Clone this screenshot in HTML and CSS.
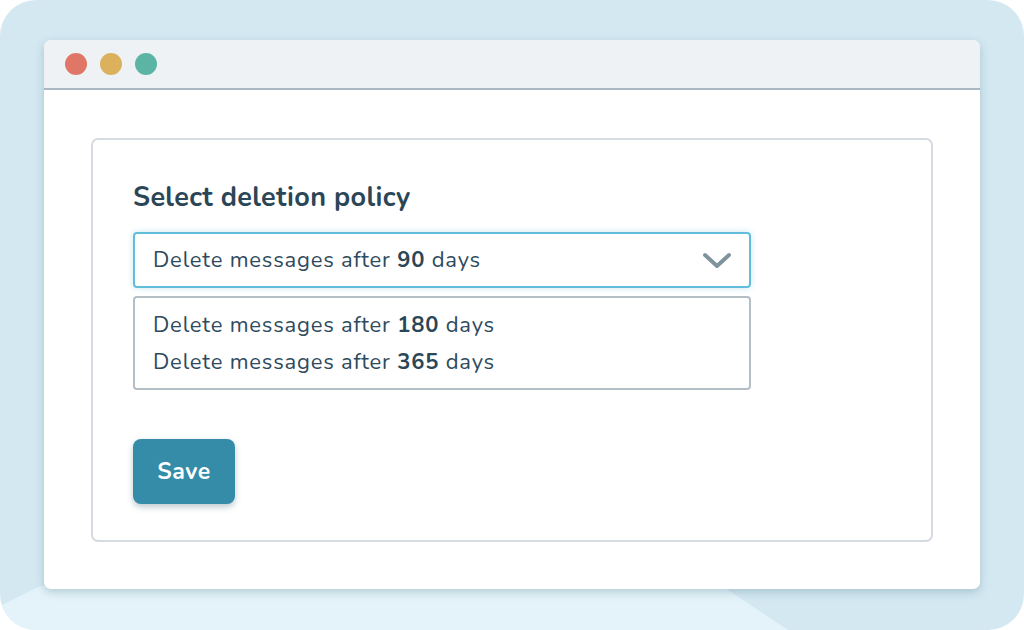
FILE: index.html
```html
<html>
	<head>
		<title>Deletion policy</title>
		<link rel="stylesheet" href="styles.css">
	</head>
	<body>
		<div class="Frame">
			<div class="Floor"></div>
			<div class="Window">
				<div class="TitleBar">
					<span class="Dot red"></span>
					<span class="Dot yellow"></span>
					<span class="Dot green"></span>
				</div>
				<div class="Content">
					<div class="Card">
						<h2 class="Heading">Select deletion policy</h2>
						<div class="Select">
							<span>Delete messages after <b>90</b> days</span>
							<svg class="Chevron" width="30" height="18" viewBox="0 0 30 18">
								<path d="M3 3 L15 14 L27 3" fill="none" stroke="#7f939f" stroke-width="4" stroke-linecap="round" stroke-linejoin="round"/>
							</svg>
						</div>
						<div class="Options">
							<div class="Option">Delete messages after <b>180</b> days</div>
							<div class="Option">Delete messages after <b>365</b> days</div>
						</div>
						<button class="Save">Save</button>
					</div>
				</div>
			</div>
		</div>
	</body>
</html>
```

FILE: styles.css
```css
html, body {margin: 0; height: 100%; overflow: hidden; background-color: white;}

.Frame {
	position: relative;
	width: 1024px;
	height: 630px;
	border-radius: 36px;
	background-color: #d3e8f1;
	overflow: hidden;
	padding: 40px 44px 0 44px;
	box-sizing: border-box;
	font-family: "Nunito", "Lato", sans-serif;
	color: #2e4a5c;
}

/* lighter floor under the window */
.Floor {
	position: absolute;
	left: 0;
	top: 586px;
	width: 800px;
	height: 44px;
	background-color: #e4f3f9;
	clip-path: polygon(0 20px, 40px 0, 722px 0, 788px 44px, 0 44px);
}

.Window {
	position: relative;
	height: 549px;
	background-color: white;
	border-radius: 7px;
	box-shadow: 0 3px 8px rgba(90, 130, 150, 0.35);
	overflow: hidden;
}

.TitleBar {
	height: 48px;
	background-color: #eef2f5;
	border-bottom: 2px solid #a8b7c1;
	display: flex;
	align-items: center;
	gap: 13px;
	padding-left: 21px;
}

.Dot {
	width: 22px;
	height: 22px;
	border-radius: 50%;
}
.red { background-color: #e07766; }
.yellow { background-color: #dbb15e; }
.green { background-color: #5cb5a4; }

.Content {
	padding: 48px 47px 0 47px;
}

.Card {
	height: 404px;
	border: 2px solid #d5dbe0;
	border-radius: 7px;
	padding: 42px 40px 0 40px;
	box-sizing: border-box;
}

.Heading {
	margin: 0 0 18px 0;
	font-size: 27px;
	line-height: 32px;
	letter-spacing: 0.35px;
	font-weight: 700;
	color: #2b4656;
}

.Select {
	width: 618px;
	height: 56px;
	box-sizing: border-box;
	border: 2px solid #62bcdc;
	border-radius: 4px;
	box-shadow: 0 0 6px rgba(98, 188, 220, 0.35);
	display: flex;
	align-items: center;
	justify-content: space-between;
	padding: 0 17px 0 18px;
	font-size: 22px;
	letter-spacing: 0.8px;
}

.Chevron {
	margin-top: 2px;
}

.Options {
	width: 618px;
	height: 94px;
	box-sizing: border-box;
	margin-top: 8px;
	border: 2px solid #b4bec5;
	border-radius: 4px;
	padding: 9px 18px;
	font-size: 22px;
	letter-spacing: 0.8px;
}

.Option {
	line-height: 37px;
}

b {
	font-weight: 700;
	color: #2b4656;
}

.Save {
	margin-top: 49px;
	width: 102px;
	height: 65px;
	border: none;
	border-radius: 8px;
	background-color: #348ca9;
	color: white;
	font-family: inherit;
	font-size: 23px;
	letter-spacing: 0.5px;
	font-weight: 700;
	box-shadow: 0 3px 6px rgba(40, 80, 100, 0.3);
}
```
